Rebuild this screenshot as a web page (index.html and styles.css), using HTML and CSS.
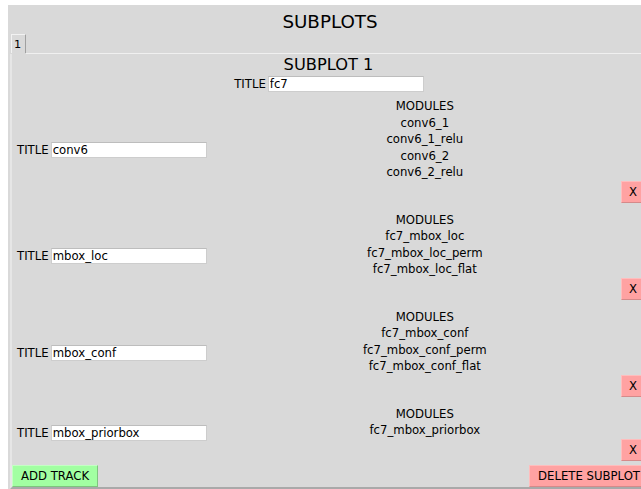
FILE: index.html
```html
<!DOCTYPE html>
<html lang="en">
<head>
<meta charset="utf-8">
<title>Subplots</title>
<link rel="stylesheet" href="styles.css">
</head>
<body>
<div class="window">
  <div class="window-title">SUBPLOTS</div>
  <div class="notebook">
    <div class="tabs">
      <div class="tab">1</div>
      <div class="tab-rest"></div>
    </div>
    <div class="page">
      <div class="subplot-title">SUBPLOT 1</div>
      <div class="field field-main">
        <span class="field-label">TITLE</span>
        <input class="entry" type="text" value="fc7">
      </div>

      <div class="tracks">
        <div class="track">
          <div class="field track-field">
            <span class="field-label">TITLE</span>
            <input class="entry" type="text" value="conv6">
          </div>
          <div class="modules">
            <div>MODULES</div>
            <div>conv6_1</div>
            <div>conv6_1_relu</div>
            <div>conv6_2</div>
            <div>conv6_2_relu</div>
          </div>
          <button class="btn btn-remove">X</button>
        </div>

        <div class="track">
          <div class="field track-field">
            <span class="field-label">TITLE</span>
            <input class="entry" type="text" value="mbox_loc">
          </div>
          <div class="modules">
            <div>MODULES</div>
            <div>fc7_mbox_loc</div>
            <div>fc7_mbox_loc_perm</div>
            <div>fc7_mbox_loc_flat</div>
          </div>
          <button class="btn btn-remove">X</button>
        </div>

        <div class="track">
          <div class="field track-field">
            <span class="field-label">TITLE</span>
            <input class="entry" type="text" value="mbox_conf">
          </div>
          <div class="modules">
            <div>MODULES</div>
            <div>fc7_mbox_conf</div>
            <div>fc7_mbox_conf_perm</div>
            <div>fc7_mbox_conf_flat</div>
          </div>
          <button class="btn btn-remove">X</button>
        </div>

        <div class="track">
          <div class="field track-field">
            <span class="field-label">TITLE</span>
            <input class="entry" type="text" value="mbox_priorbox">
          </div>
          <div class="modules">
            <div>MODULES</div>
            <div>fc7_mbox_priorbox</div>
          </div>
          <button class="btn btn-remove">X</button>
        </div>
      </div>

      <div class="page-footer">
        <button class="btn btn-add">ADD TRACK</button>
        <button class="btn btn-delete">DELETE SUBPLOT</button>
      </div>
    </div>
  </div>
</div>
</body>
</html>
```
FILE: styles.css
```css
html, body {
  margin: 0;
  padding: 0;
  background: #ffffff;
  width: 641px;
  height: 489px;
  overflow: hidden;
}

body {
  font-family: "DejaVu Sans", sans-serif;
  font-size: 11.7px;
  color: #000000;
}

/* the window runs a little past the right edge of the view */
.window {
  margin: 5px 0 0 8px;
  width: 644px;
  height: 484px;
  background: #d9d9d9;
  display: flex;
  flex-direction: column;
}

.window-title {
  font-size: 18.3px;
  line-height: 24px;
  padding-top: 5px;
  text-align: center;
}

.notebook {
  flex: 1;
  margin-left: 2px;
  display: flex;
  flex-direction: column;
}

/* tab strip */
.tabs {
  display: flex;
  height: 20px;
}

.tab {
  margin-left: 1px;
  width: 15px;
  height: 19px;
  box-sizing: border-box;
  padding-left: 2px;
  border-left: 1px solid #f2f2f2;
  border-top: 1px solid #f2f2f2;
  border-right: 1px solid #a0a0a0;
  font-size: 11.3px;
  line-height: 19px;
}

.tab-rest {
  flex: 1;
  border-bottom: 1px solid #f0f0f0;
}

/* notebook page */
.page {
  flex: 1;
  border-left: 2px solid #e6e6e6;
  border-bottom: 2px solid #a9a9a9;
  padding-right: 3px;
  display: flex;
  flex-direction: column;
}

.subplot-title {
  margin-top: 1px;
  padding-right: 4px;
  font-size: 16.25px;
  line-height: 20px;
  text-align: center;
}

.field {
  display: flex;
  align-items: center;
  gap: 2px;
}

.field-main {
  margin-top: 1px;
  padding-right: 3px;
  justify-content: center;
}

.entry {
  width: 156px;
  height: 16px;
  box-sizing: border-box;
  margin: 0;
  padding: 0 1px;
  border: 1px solid #cdcdcd;
  border-top-color: #bdbdbd;
  background: #ffffff;
  font-family: "DejaVu Sans", sans-serif;
  font-size: 11.7px;
  color: #000000;
  outline: none;
}

/* one row per track */
.tracks {
  margin-top: 6px;
  display: flex;
  flex-direction: column;
  gap: 9px;
}

.track {
  display: grid;
  grid-template-columns: auto 1fr auto;
  grid-template-rows: auto auto;
  padding-left: 5px;
}

.track-field {
  grid-column: 1;
  grid-row: 1 / 3;
  align-self: center;
}

.modules {
  grid-column: 2 / 4;
  grid-row: 1;
  padding-right: 6px;
  text-align: center;
  line-height: 16.5px;
}

.btn {
  margin: 0;
  height: 22px;
  padding: 0 8px;
  border: 1px solid;
  font-family: "DejaVu Sans", sans-serif;
  font-size: 11.7px;
  color: #000000;
  line-height: 20px;
  cursor: pointer;
}

.btn-remove,
.btn-delete {
  background: #ffa2a2;
  border-color: #ffbdbd #d58a8a #d58a8a #ffbdbd;
}

.btn-remove {
  grid-column: 3;
  grid-row: 2;
  justify-self: end;
  width: 28px;
  padding: 0 0 0 7px;
  text-align: left;
}

.btn-add {
  background: #a2ffa2;
  border-color: #c4ffc4 #7fc47f #7fc47f #c4ffc4;
}

.page-footer {
  margin-top: auto;
  display: flex;
  justify-content: space-between;
}
```
